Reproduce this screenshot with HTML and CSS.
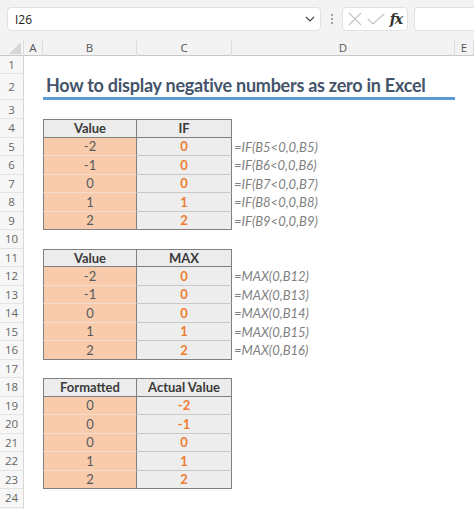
FILE: index.html
```html
<!DOCTYPE html>
<html>
<head>
<meta charset="utf-8">
<link rel="stylesheet" href="styles.css">
</head>
<body>
<div class="app">
  <div class="fbar">
    <div class="namebox"><span class="ref">I26</span>
      <svg class="chev" width="10" height="6" viewBox="0 0 10 6"><path d="M1 1 L5 5 L9 1" fill="none" stroke="#444" stroke-width="1.2"/></svg>
    </div>
    <div class="dots"><i></i><i></i><i></i></div>
    <div class="btns">
      <svg width="16" height="16" viewBox="0 0 16 16"><path d="M2 2 L14 14 M14 2 L2 14" stroke="#c4c4c4" stroke-width="1.2"/></svg>
      <svg width="18" height="16" viewBox="0 0 18 16"><path d="M1 8 L6 13 L17 3" fill="none" stroke="#c4c4c4" stroke-width="1.2"/></svg>
      <span class="fx">fx</span>
    </div>
    <div class="finput"></div>
  </div>
  <div class="colhead">
    <div class="corner"><svg width="12" height="12" viewBox="0 0 12 12"><path d="M12 0 L12 12 L0 12 Z" fill="#d6d6d6"/></svg></div>
    <div class="ch">A</div><div class="ch">B</div><div class="ch">C</div><div class="ch">D</div><div class="ch">E</div>
  </div>
  <div class="sheet">
    <div class="rn r1">1</div><div class="c"></div><div class="c"></div><div class="c"></div><div class="c"></div><div class="c"></div>
    <div class="rn r2">2</div><div class="c"></div><div class="title"><span>How to display negative numbers as zero in Excel</span></div><div class="c"></div>
    <div class="rn r3">3</div><div class="c"></div><div class="c"></div><div class="c"></div><div class="c"></div><div class="c"></div>

    <div class="rn">4</div><div class="c"></div><div class="th tl">Value</div><div class="th">IF</div><div class="c"></div><div class="c"></div>
    <div class="rn">5</div><div class="c"></div><div class="tb">-2</div><div class="tc">0</div><div class="fm">=IF(B5&lt;0,0,B5)</div><div class="c"></div>
    <div class="rn">6</div><div class="c"></div><div class="tb">-1</div><div class="tc">0</div><div class="fm">=IF(B6&lt;0,0,B6)</div><div class="c"></div>
    <div class="rn">7</div><div class="c"></div><div class="tb">0</div><div class="tc">0</div><div class="fm">=IF(B7&lt;0,0,B7)</div><div class="c"></div>
    <div class="rn">8</div><div class="c"></div><div class="tb">1</div><div class="tc">1</div><div class="fm">=IF(B8&lt;0,0,B8)</div><div class="c"></div>
    <div class="rn">9</div><div class="c"></div><div class="tb last">2</div><div class="tc last">2</div><div class="fm">=IF(B9&lt;0,0,B9)</div><div class="c"></div>
    <div class="rn">10</div><div class="c"></div><div class="c"></div><div class="c"></div><div class="c"></div><div class="c"></div>

    <div class="rn">11</div><div class="c"></div><div class="th tl">Value</div><div class="th">MAX</div><div class="c"></div><div class="c"></div>
    <div class="rn">12</div><div class="c"></div><div class="tb">-2</div><div class="tc">0</div><div class="fm">=MAX(0,B12)</div><div class="c"></div>
    <div class="rn">13</div><div class="c"></div><div class="tb">-1</div><div class="tc">0</div><div class="fm">=MAX(0,B13)</div><div class="c"></div>
    <div class="rn">14</div><div class="c"></div><div class="tb">0</div><div class="tc">0</div><div class="fm">=MAX(0,B14)</div><div class="c"></div>
    <div class="rn">15</div><div class="c"></div><div class="tb">1</div><div class="tc">1</div><div class="fm">=MAX(0,B15)</div><div class="c"></div>
    <div class="rn">16</div><div class="c"></div><div class="tb last">2</div><div class="tc last">2</div><div class="fm">=MAX(0,B16)</div><div class="c"></div>
    <div class="rn">17</div><div class="c"></div><div class="c"></div><div class="c"></div><div class="c"></div><div class="c"></div>

    <div class="rn">18</div><div class="c"></div><div class="th tl">Formatted</div><div class="th">Actual Value</div><div class="c"></div><div class="c"></div>
    <div class="rn">19</div><div class="c"></div><div class="tb">0</div><div class="tc">-2</div><div class="c"></div><div class="c"></div>
    <div class="rn">20</div><div class="c"></div><div class="tb">0</div><div class="tc">-1</div><div class="c"></div><div class="c"></div>
    <div class="rn">21</div><div class="c"></div><div class="tb">0</div><div class="tc">0</div><div class="c"></div><div class="c"></div>
    <div class="rn">22</div><div class="c"></div><div class="tb">1</div><div class="tc">1</div><div class="c"></div><div class="c"></div>
    <div class="rn">23</div><div class="c"></div><div class="tb last">2</div><div class="tc last">2</div><div class="c"></div><div class="c"></div>
    <div class="rn">24</div><div class="c"></div><div class="c"></div><div class="c"></div><div class="c"></div><div class="c"></div>
    <div class="rn"></div><div class="c"></div><div class="c"></div><div class="c"></div><div class="c"></div><div class="c"></div>
  </div>
</div>
</body>
</html>
```

FILE: styles.css
```css
* { box-sizing: border-box; }
html, body { margin: 0; padding: 0; background: #fff; }
body { width: 474px; height: 509px; overflow: hidden; font-family: "Lato", "Liberation Sans", sans-serif; }
.app { width: 474px; }

.fbar {
  height: 40px;
  background: #f3f3f3;
  display: flex;
  align-items: flex-start;
  padding: 7px 0 0 7px;
}
.namebox {
  width: 314px; height: 24px;
  background: #fff;
  border: 1px solid #e1e1e1;
  border-radius: 4px;
  display: flex; align-items: center; justify-content: space-between;
  padding: 0 4px 0 7px;
  font-family: "Open Sans", "Noto Sans", sans-serif;
  font-size: 12px; color: #222;
}
.chev { margin-right: 1px; }
.dots { width: 21px; height: 24px; display: flex; flex-direction: column; align-items: center; justify-content: center; gap: 2px; }
.dots i { display: block; width: 2px; height: 2px; background: #888; border-radius: 1px; }
.btns {
  width: 66px; height: 24px;
  background: #fff;
  border: 1px solid #e1e1e1;
  border-radius: 4px;
  display: flex; align-items: center; justify-content: space-between;
  padding: 0 5px 0 4px;
}
.fx { font-family: "DejaVu Serif", "Liberation Serif", serif; font-style: italic; font-weight: bold; font-size: 14px; color: #333; letter-spacing: -1px; }
.finput {
  margin-left: 6px;
  flex: 1; height: 24px;
  background: #fff;
  border: 1px solid #e1e1e1;
  border-right: none;
  border-radius: 4px 0 0 4px;
}

.colhead {
  display: grid;
  grid-template-columns: 24px 19px 94px 95px 223px 1fr;
  height: 16px;
  background: #f3f3f3;
  border-bottom: 1px solid #c8c8c8;
}
.corner { border-right: 1px solid #dcdcdc; display: flex; align-items: flex-end; justify-content: flex-end; padding: 0 2px 2px 0; }
.ch {
  border-right: 1px solid #dcdcdc;
  font-family: "Open Sans", "Noto Sans", sans-serif;
  font-size: 11.5px; color: #555;
  text-align: center; line-height: 16px;
}

.sheet {
  display: grid;
  grid-template-columns: 24px 19px 94px 95px 223px 1fr;
  grid-template-rows: 18px 26px 19px repeat(22, 18.5px);
}
.rn {
  background: #f7f7f7;
  border-right: 1px solid #d6d6d6;
  border-bottom: 1px solid #e4e4e4;
  font-family: "Open Sans", "Noto Sans", sans-serif;
  font-size: 11.5px; color: #666;
  display: flex; align-items: center; justify-content: center;
}
.c { background: #fff; }

.title {
  grid-column: 3 / 6;
  border-bottom: 3px solid #5b9bd5;
  display: flex; align-items: flex-end;
  padding: 0 0 1px 3px;
  font-family: "Lato", sans-serif;
  font-weight: bold;
  font-size: 18px;
  letter-spacing: -0.25px;
  color: #44546a;
}

.th, .tb, .tc {
  display: flex; align-items: center; justify-content: center;
  font-family: "Lato", sans-serif;
  font-size: 13px;
  border-right: 1px solid #808080;
  border-bottom: 1px solid #c9c9c9;
}
.th {
  background: #ececec;
  font-weight: bold; color: #3a3a3a;
  border-top: 1px solid #808080;
  border-bottom: 1px solid #808080;
}
.th.tl, .tb { border-left: 1px solid #808080; }
.tb { background: #f8cbad; color: #595959; border-bottom-color: #f3dccc; }
.tc { background: #ededed; color: #ed7d31; font-weight: bold; }
.tb.last, .tc.last { border-bottom: 1px solid #808080; }

.fm {
  display: flex; align-items: center;
  padding-left: 2px;
  font-family: "Lato", sans-serif;
  font-style: italic;
  font-size: 13px;
  color: #7f7f7f;
}
```
